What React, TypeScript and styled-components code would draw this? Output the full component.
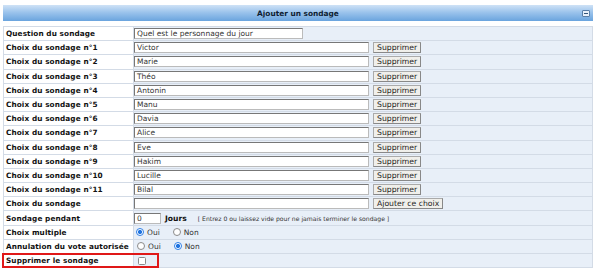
import React from 'react';
import styled, { createGlobalStyle } from 'styled-components';

const choices = ['Victor', 'Marie', 'Théo', 'Antonin', 'Manu', 'Davia', 'Alice', 'Eve', 'Hakim', 'Lucille', 'Bilal'];

const GlobalStyle = createGlobalStyle`
    html, body {
        margin: 0;
        padding: 0;
        background: #fff;
    }
    body {
        font-family: "DejaVu Sans", Verdana, sans-serif;
        font-size: 8px;
        color: #222;
    }
`;

const border = `#d3dbe6`;
const cellBg = `#e8eff8`;

const Page = styled.div`
    padding: 5px 7px 0 3px;
`;

const Header = styled.div`
    position: relative;
    height: 16px;
    display: flex;
    align-items: center;
    justify-content: center;
    background: linear-gradient(to bottom, #cfe2f6 0%, #9cc4ec 45%, #6aa4de 100%);
    font-weight: 700;
    font-size: 7.4px;
    color: #0f1e33;
`;

const Collapse = styled.span`
    position: absolute;
    right: 3px;
    top: 5px;
    width: 6px;
    height: 5px;
    background: #e8f0fa;
    border: 1px solid #5a7fa8;
    border-radius: 1px;
    &::after {
        content: '';
        position: absolute;
        left: 1px;
        right: 1px;
        top: 2px;
        height: 1px;
        background: #33557a;
    }
`;

const Form = styled.div`
    margin-top: 5px;
    border-top: 1px solid ${border};
`;

const Row = styled.div<{ $alert?: boolean }>`
    position: relative;
    display: grid;
    grid-template-columns: 131px 1fr;
    height: 13.2px;
    border-bottom: 1px solid ${border};
    ${p => p.$alert && `
        &::after {
            content: '';
            position: absolute;
            left: -1px;
            top: -1px;
            width: 153px;
            height: 11.2px;
            border: 2px solid #e01818;
        }
    `}
`;

const Label = styled.div`
    display: flex;
    align-items: center;
    padding-left: 2px;
    background: #fff;
    border-left: 1px solid ${border};
    border-right: 1px solid ${border};
    font-weight: 700;
    font-size: 7.3px;
    letter-spacing: 0.1px;
    color: #111;
    white-space: nowrap;
    overflow: hidden;
`;

const Value = styled.div`
    display: flex;
    align-items: center;
    gap: 4px;
    padding-left: 0;
    background: ${cellBg};
    border-right: 1px solid ${border};
    white-space: nowrap;
`;

const TextInput = styled.div<{ $w: number }>`
    box-sizing: border-box;
    width: ${p => p.$w}px;
    height: 11px;
    display: flex;
    align-items: center;
    padding-left: 2px;
    background: #fff;
    border: 1px solid #777;
    border-right-color: #bbb;
    border-bottom-color: #bbb;
    font-size: 7.5px;
    color: #333;
`;

const Button = styled.div`
    box-sizing: border-box;
    height: 11px;
    display: flex;
    align-items: center;
    padding: 0 3px;
    background: #f0efeb;
    border: 1px solid #888;
    border-top-color: #aaa;
    border-left-color: #aaa;
    font-size: 7.7px;
    color: #222;
`;

const Unit = styled.span`
    font-weight: 700;
    font-size: 7.6px;
    color: #111;
`;

const Hint = styled.span`
    margin-left: 7px;
    font-size: 6.1px;
    color: #333;
`;

const Option = styled.label`
    display: flex;
    align-items: center;
    gap: 3px;
    margin-right: 9px;
    font-size: 7.5px;
    color: #333;
`;

const Radio = styled.span<{ $on?: boolean }>`
    box-sizing: border-box;
    width: 8px;
    height: 8px;
    border-radius: 50%;
    border: 1px solid ${p => (p.$on ? '#2f7fe6' : '#8a8a8a')};
    background: ${p => (p.$on ? 'radial-gradient(circle, #1f73e0 0 2px, #fff 2.2px)' : '#fff')};
`;

const Check = styled.span`
    box-sizing: border-box;
    width: 8px;
    height: 8px;
    margin-left: 4px;
    border-radius: 1.5px;
    border: 1px solid #8a8a8a;
    background: #fff;
`;

const YesNo = ({ yes, offset }: { yes: boolean; offset: number }) => (
    <Value style={{ paddingLeft: offset }}>
        <Option><Radio $on={yes} />Oui</Option>
        <Option><Radio $on={!yes} />Non</Option>
    </Value>
);

export default function App() {
    return (
        <Page>
            <GlobalStyle />
            <Header>
                Ajouter un sondage
                <Collapse />
            </Header>
            <Form>
                <Row>
                    <Label>Question du sondage</Label>
                    <Value><TextInput $w={169}>Quel est le personnage du jour</TextInput></Value>
                </Row>
                {choices.map((c, i) => (
                    <Row key={c}>
                        <Label>Choix du sondage n°{i + 1}</Label>
                        <Value>
                            <TextInput $w={235}>{c}</TextInput>
                            <Button>Supprimer</Button>
                        </Value>
                    </Row>
                ))}
                <Row>
                    <Label>Choix du sondage</Label>
                    <Value>
                        <TextInput $w={235} />
                        <Button>Ajouter ce choix</Button>
                    </Value>
                </Row>
                <Row>
                    <Label>Sondage pendant</Label>
                    <Value>
                        <TextInput $w={27}>0</TextInput>
                        <Unit>Jours</Unit>
                        <Hint>[ Entrez 0 ou laissez vide pour ne jamais terminer le sondage ]</Hint>
                    </Value>
                </Row>
                <Row>
                    <Label>Choix multiple</Label>
                    <YesNo yes offset={2} />
                </Row>
                <Row>
                    <Label>Annulation du vote autorisée</Label>
                    <YesNo yes={false} offset={3} />
                </Row>
                <Row $alert>
                    <Label>Supprimer le sondage</Label>
                    <Value><Check /></Value>
                </Row>
            </Form>
        </Page>
    );
}
